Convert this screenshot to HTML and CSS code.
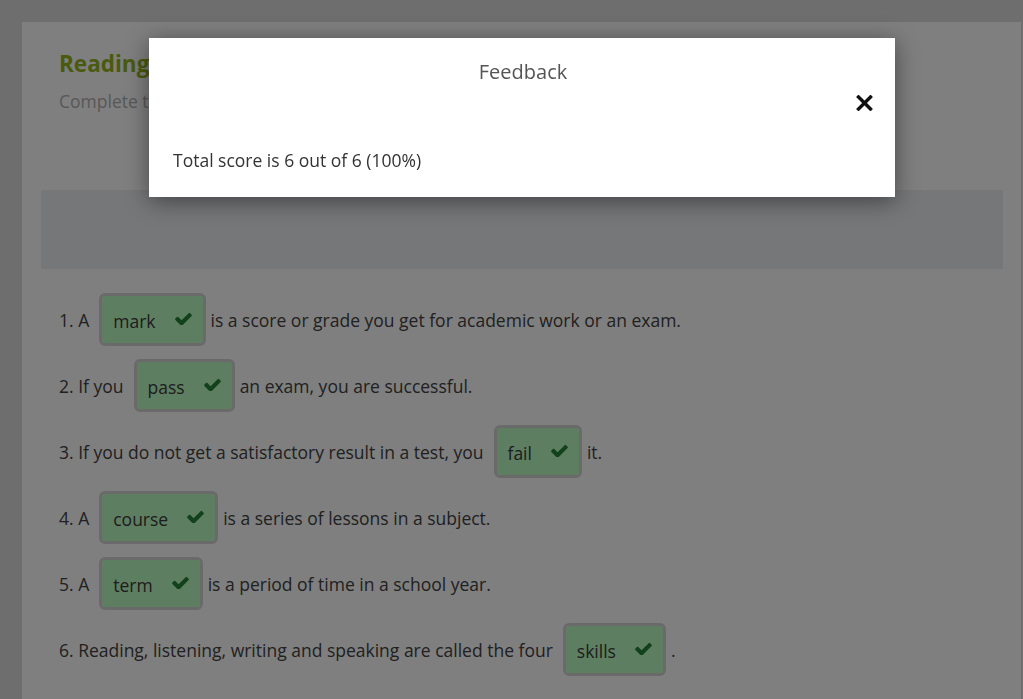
FILE: index.html
```html
<!DOCTYPE html>
<html lang="en">
<head>
<meta charset="utf-8">
<title>Reading</title>
<link rel="stylesheet" href="styles.css">
</head>
<body>
<main class="card">
  <header class="card-head">
    <h1 class="title">Reading</h1>
    <p class="desc">Complete the sentences with the correct words.</p>
  </header>
  <section class="task">
    <div class="pool"></div>
    <div class="rows">
      <p class="row"><span>1. A</span><span class="drop"><span class="word">mark</span><svg class="check" viewBox="110 280 1570 1150"><path d="M1671 566q0 40-28 68l-724 724-136 136q-28 28-68 28t-68-28l-136-136-362-362q-28-28-28-68t28-68l136-136q28-28 68-28t68 28l294 295 656-657q28-28 68-28t68 28l136 136q28 28 28 68z"/></svg></span><span>is a score or grade you get for academic work or an exam.</span></p>
      <p class="row"><span>2. If you</span><span class="drop"><span class="word">pass</span><svg class="check" viewBox="110 280 1570 1150"><path d="M1671 566q0 40-28 68l-724 724-136 136q-28 28-68 28t-68-28l-136-136-362-362q-28-28-28-68t28-68l136-136q28-28 68-28t68 28l294 295 656-657q28-28 68-28t68 28l136 136q28 28 28 68z"/></svg></span><span>an exam, you are successful.</span></p>
      <p class="row"><span>3. If you do not get a satisfactory result in a test, you</span><span class="drop"><span class="word">fail</span><svg class="check" viewBox="110 280 1570 1150"><path d="M1671 566q0 40-28 68l-724 724-136 136q-28 28-68 28t-68-28l-136-136-362-362q-28-28-28-68t28-68l136-136q28-28 68-28t68 28l294 295 656-657q28-28 68-28t68 28l136 136q28 28 28 68z"/></svg></span><span>it.</span></p>
      <p class="row"><span>4. A</span><span class="drop"><span class="word">course</span><svg class="check" viewBox="110 280 1570 1150"><path d="M1671 566q0 40-28 68l-724 724-136 136q-28 28-68 28t-68-28l-136-136-362-362q-28-28-28-68t28-68l136-136q28-28 68-28t68 28l294 295 656-657q28-28 68-28t68 28l136 136q28 28 28 68z"/></svg></span><span>is a series of lessons in a subject.</span></p>
      <p class="row"><span>5. A</span><span class="drop"><span class="word">term</span><svg class="check" viewBox="110 280 1570 1150"><path d="M1671 566q0 40-28 68l-724 724-136 136q-28 28-68 28t-68-28l-136-136-362-362q-28-28-28-68t28-68l136-136q28-28 68-28t68 28l294 295 656-657q28-28 68-28t68 28l136 136q28 28 28 68z"/></svg></span><span>is a period of time in a school year.</span></p>
      <p class="row"><span>6. Reading, listening, writing and speaking are called the four</span><span class="drop"><span class="word">skills</span><svg class="check" viewBox="110 280 1570 1150"><path d="M1671 566q0 40-28 68l-724 724-136 136q-28 28-68 28t-68-28l-136-136-362-362q-28-28-28-68t28-68l136-136q28-28 68-28t68 28l294 295 656-657q28-28 68-28t68 28l136 136q28 28 28 68z"/></svg></span><span>.</span></p>
    </div>
  </section>
</main>
<div class="overlay"></div>
<div class="dialog" role="dialog">
  <h2 class="dialog-title">Feedback</h2>
  <div class="dialog-close-row">
    <button class="close" aria-label="Close"><svg viewBox="0 0 16 16"><path d="M2 2L14 14M14 2L2 14"/></svg></button>
  </div>
  <p class="dialog-text">Total score is 6 out of 6 (100%)</p>
</div>
</body>
</html>
```

FILE: styles.css
```css
html, body {
  margin: 0;
  padding: 0;
  height: 100%;
  overflow: hidden;
}
body {
  background: #dcdcdc;
  font-family: "Open Sans", "Noto Sans", sans-serif;
  color: #444;
  padding: 22px 2px 0 22px;
  box-sizing: border-box;
}
.card {
  background: #ffffff;
  min-height: 700px;
}
.card-head {
  padding: 28px 37px 0 37px;
}
.title {
  margin: 0;
  font-size: 22.5px;
  line-height: 28px;
  font-weight: 700;
  color: #94b41c;
}
.desc {
  margin: 11px 0 0 0;
  font-size: 17.5px;
  line-height: 24px;
  color: #b0b0b0;
}
.task {
  margin: 77px 18px 0 19px;
}
.pool {
  height: 79px;
  background: #eceef2;
}
.rows {
  padding: 24px 0 0 18px;
}
.row {
  display: flex;
  align-items: center;
  margin: 0 0 13px 0;
  font-size: 17.5px;
  line-height: 24px;
  color: #424242;
}
.drop {
  display: inline-flex;
  align-items: center;
  box-sizing: border-box;
  height: 53px;
  margin: 0 5px 0 10px;
  padding: 0 11px 0 11px;
  border: 3px solid #d4d4d4;
  border-radius: 6px;
  background: #bdfcc4;
  background-clip: padding-box;
}
.word {
  color: #3a3a3a;
  padding-top: 2px;
}
.check {
  width: 17px;
  height: 13px;
  margin-left: 19px;
  margin-top: -2px;
  fill: #228438;
}
.overlay {
  position: fixed;
  inset: 0;
  background: rgba(0, 0, 0, 0.5);
}
.dialog {
  position: absolute;
  left: 149px;
  top: 38px;
  width: 746px;
  height: 159px;
  box-sizing: border-box;
  background: #ffffff;
  box-shadow: 0 4px 22px rgba(0, 0, 0, 0.45);
  display: flex;
  flex-direction: column;
  padding: 21px 22px 0 24px;
}
.dialog-title {
  margin: 0;
  text-align: center;
  font-size: 20px;
  line-height: 26px;
  font-weight: 400;
  color: #555;
}
.dialog-close-row {
  display: flex;
  justify-content: flex-end;
  margin-top: 10px;
  height: 16px;
}
.close {
  width: 17px;
  height: 16px;
  padding: 0;
  border: 0;
  background: none;
  display: block;
}
.close svg {
  width: 17px;
  height: 16px;
  display: block;
  stroke: #111;
  stroke-width: 3.4;
  stroke-linecap: square;
  fill: none;
}
.dialog-text {
  margin: 37px 0 0 0;
  font-size: 17.5px;
  line-height: 24px;
  color: #333;
}
```
